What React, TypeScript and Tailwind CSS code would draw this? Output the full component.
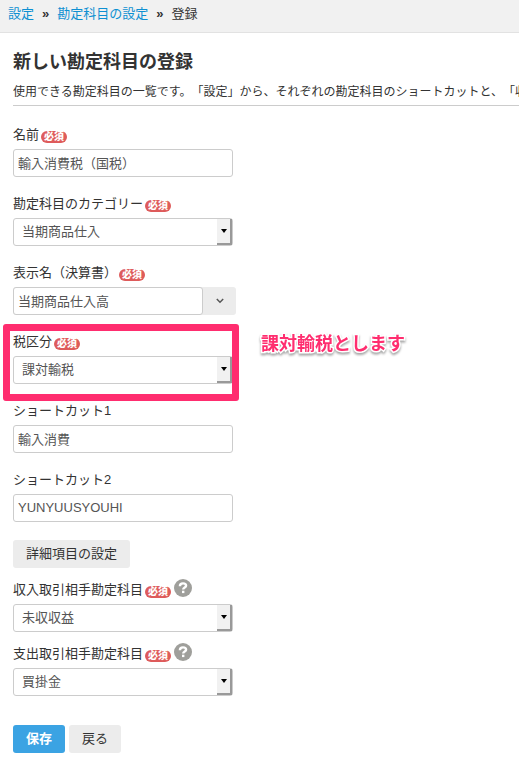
import clsx from "clsx";
import { ReactNode } from "react";

interface FieldProps {
  id: string;
  label: string;
  required?: boolean;
  help?: boolean;
  children: ReactNode;
}

function Field({ id, label, required, help, children }: FieldProps) {
  return (
    <div className="relative w-[220px]">
      <div className="mb-1 flex h-5 items-center whitespace-nowrap">
        <label htmlFor={id} className="flex items-center">
          {label}
          {required && (
            <span className="mt-1 ml-0.5 flex h-3 items-center rounded-full bg-[#de5b5b] px-[3px] text-[10px] font-black text-white">
              必須
            </span>
          )}
        </label>
        {help && (
          <button type="button" aria-label="ヘルプ" className="-mt-1 ml-[3px]">
            <svg viewBox="0 0 18 18" className="size-[18px]">
              <circle cx="9" cy="9" r="9" fill="#9f9f9b" />
              <path
                d="M5.9 7.2C5.9 5.2 7.2 4.4 9 4.4s3.1.9 3.1 2.3c0 1.9-2.9 1.8-2.9 3.9"
                fill="none"
                stroke="#fff"
                strokeWidth="2.4"
              />
              <rect x="8" y="11.7" width="2.4" height="2.4" fill="#fff" />
            </svg>
          </button>
        )}
      </div>
      {children}
    </div>
  );
}

function TextInput({ id, value }: { id: string; value: string }) {
  return (
    <input
      id={id}
      type="text"
      defaultValue={value}
      className="block h-7 w-full min-w-0 rounded-[3px] border border-[#ccc] bg-white px-1 pb-0.5 text-[#555]"
    />
  );
}

function SelectBox({ id, value }: { id: string; value: string }) {
  return (
    <div className="relative">
      <select
        id={id}
        defaultValue={value}
        className="block h-7 w-full appearance-none rounded-[3px] border border-[#ccc] bg-white pr-5 pl-2 text-[#555]"
      >
        <option>{value}</option>
      </select>
      <span className="pointer-events-none absolute inset-y-px right-px flex w-[15px] items-center justify-center border-r-2 border-b-2 border-[#999] bg-[#f1f1f1]">
        <svg viewBox="0 0 6 4" className="h-1 w-1.5">
          <path d="M0 0h6L3 4z" fill="#000" />
        </svg>
      </span>
    </div>
  );
}

const grayButton = "h-7 rounded-[3px] bg-[#ececec] whitespace-nowrap";

export default function App() {
  return (
    <div
      lang="ja"
      className="overflow-hidden bg-white pb-[18px] font-['Liberation_Sans','Noto_Sans_CJK_JP',sans-serif] text-[13px] leading-5 text-[#333] [text-spacing-trim:space-all]"
    >
      <nav className="flex h-[33px] items-center gap-2 border-b border-[#e2e2e2] bg-[#f1f1f1] px-2 pb-1">
        <a href="#settings" className="text-[#0e90d2]">
          設定
        </a>
        <span className="font-bold">»</span>
        <a href="#accounts" className="text-[#0e90d2]">
          勘定科目の設定
        </a>
        <span className="font-bold">»</span>
        <span>登録</span>
      </nav>

      <main className="pt-[17px] pl-[13px]">
        <h1 className="text-[18px] leading-6 font-bold">
          新しい勘定科目の登録
        </h1>
        <p className="mb-[19px] overflow-hidden border-b border-[#ccc] pt-2 pb-[3px] text-xs leading-5 whitespace-nowrap">
          使用できる勘定科目の一覧です。「設定」から、それぞれの勘定科目のショートカットと、「収
        </p>

        <form onSubmit={(e) => e.preventDefault()}>
          <div className="flex flex-col gap-[17px]">
            <Field id="name" label="名前" required>
              <TextInput id="name" value="輸入消費税（国税）" />
            </Field>
            <Field id="category" label="勘定科目のカテゴリー" required>
              <SelectBox id="category" value="当期商品仕入" />
            </Field>
            <Field id="display" label="表示名（決算書）" required>
              <div className="flex w-[223px] rounded-[3px] bg-[#ececec]">
                <TextInput id="display" value="当期商品仕入高" />
                <button
                  type="button"
                  aria-label="候補を表示"
                  className="flex h-7 w-[33px] shrink-0 items-center justify-center"
                >
                  <svg viewBox="0 0 8 6" className="h-1.5 w-2">
                    <path
                      d="M.8 1L4 4.2 7.2 1"
                      fill="none"
                      stroke="#555"
                      strokeWidth="1.5"
                    />
                  </svg>
                </button>
              </div>
            </Field>
            <Field id="tax" label="税区分" required>
              <SelectBox id="tax" value="課対輸税" />
              <div className="pointer-events-none absolute -top-2 -right-1.5 -bottom-[17px] -left-2.5 rounded-[3px] border-[7px] border-[#ff2d6f]" />
              <div className="absolute top-0 left-62 text-[18px] leading-6 font-bold whitespace-nowrap text-[#ff2d6f] [paint-order:stroke_fill] [-webkit-text-stroke:3px_white] [filter:drop-shadow(0_2px_1px_rgba(0,0,0,0.35))]">
                課対輸税とします
              </div>
            </Field>
            <Field id="shortcut1" label="ショートカット1">
              <TextInput id="shortcut1" value="輸入消費" />
            </Field>
            <Field id="shortcut2" label="ショートカット2">
              <TextInput id="shortcut2" value="YUNYUUSYOUHI" />
            </Field>
          </div>

          <button type="button" className={clsx(grayButton, "mt-[18px] px-[13px]")}>
            詳細項目の設定
          </button>

          <div className="mt-3 flex flex-col gap-3">
            <Field id="income" label="収入取引相手勘定科目" required help>
              <SelectBox id="income" value="未収収益" />
            </Field>
            <Field id="expense" label="支出取引相手勘定科目" required help>
              <SelectBox id="expense" value="買掛金" />
            </Field>
          </div>

          <div className="mt-[29px] flex gap-1">
            <button
              type="submit"
              className="h-7 rounded-[3px] bg-[#3ba3e3] px-[13px] font-bold text-white"
            >
              保存
            </button>
            <button type="button" className={clsx(grayButton, "px-[13px]")}>
              戻る
            </button>
          </div>
        </form>
      </main>
    </div>
  );
}
